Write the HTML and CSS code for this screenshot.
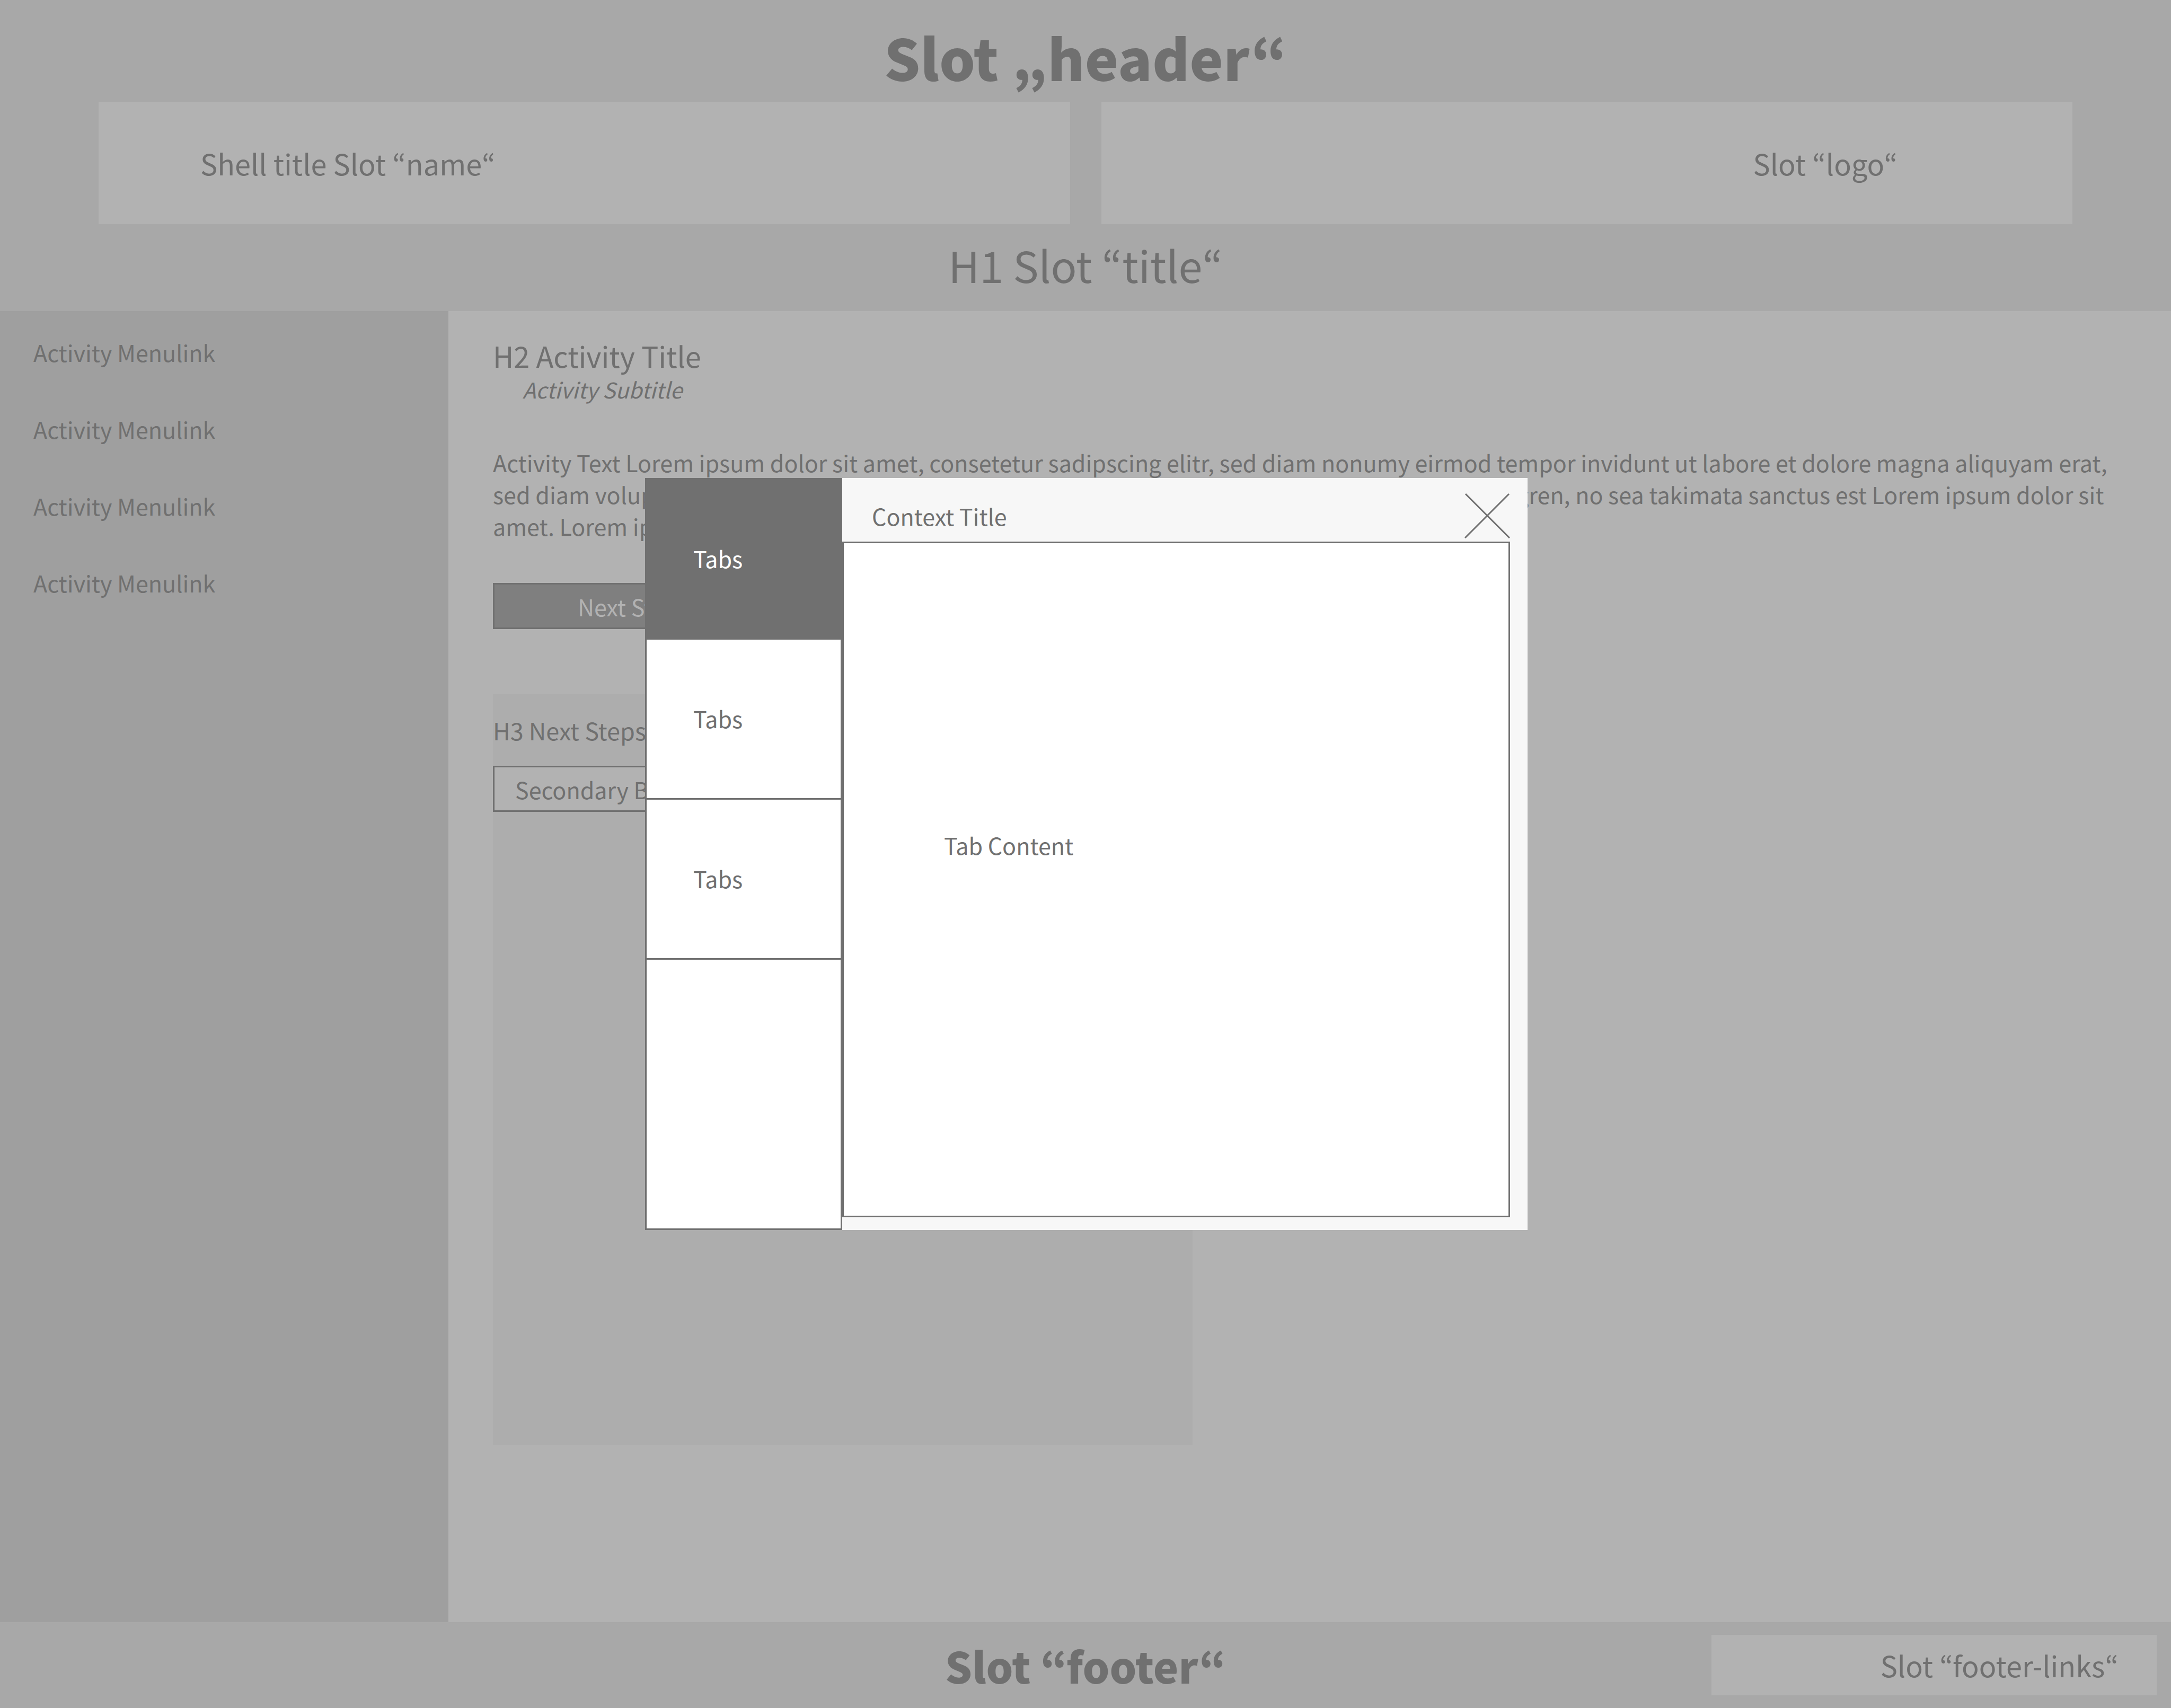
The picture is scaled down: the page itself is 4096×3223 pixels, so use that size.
FILE: index.html
```html
<!DOCTYPE html>
<html lang="en">
<head>
<meta charset="utf-8">
<title>Shell layout</title>
<link rel="stylesheet" href="styles.css">
</head>
<body>
<header class="shell-header">
  <p class="slot-title slot-title-header">Slot „header“</p>
  <div class="header-slots">
    <div class="slot slot-name">Shell title Slot “name“</div>
    <div class="slot slot-logo">Slot “logo“</div>
  </div>
  <h1 class="page-title">H1 Slot “title“</h1>
</header>

<div class="shell-body">
  <nav class="sidebar" aria-label="Activities">
    <a class="menu-link" href="#">Activity Menulink</a>
    <a class="menu-link" href="#">Activity Menulink</a>
    <a class="menu-link" href="#">Activity Menulink</a>
    <a class="menu-link" href="#">Activity Menulink</a>
  </nav>
  <main class="activity">
    <h2 class="activity-title">H2 Activity Title</h2>
    <p class="activity-subtitle">Activity Subtitle</p>
    <p class="activity-text">Activity Text Lorem ipsum dolor sit amet, consetetur sadipscing elitr, sed diam nonumy eirmod tempor invidunt ut labore et dolore magna aliquyam erat, sed diam voluptua. At vero eos et accusam et justo duo dolores et ea rebum. Stet clita kasd gubergren, no sea takimata sanctus est Lorem ipsum dolor sit amet. Lorem ipsum dolor sit amet.</p>
    <button class="button button-primary" type="button">Next Step</button>
    <section class="next-steps">
      <h3 class="next-steps-title">H3 Next Steps</h3>
      <button class="button button-secondary" type="button">Secondary Button</button>
    </section>
  </main>
</div>

<footer class="shell-footer">
  <p class="slot-title slot-title-footer">Slot “footer“</p>
  <div class="slot slot-links">Slot “footer-links“</div>
</footer>

<div class="modal-layer">
  <div class="modal" role="dialog" aria-modal="true" aria-labelledby="context-title">
    <div class="tabs" role="tablist" aria-orientation="vertical">
      <button class="tab tab-active" type="button" role="tab" aria-selected="true">Tabs</button>
      <button class="tab" type="button" role="tab" aria-selected="false">Tabs</button>
      <button class="tab" type="button" role="tab" aria-selected="false">Tabs</button>
    </div>
    <div class="context">
      <div class="context-bar">
        <h2 class="context-title" id="context-title">Context Title</h2>
        <button class="close" type="button" aria-label="Close">
          <svg class="close-icon" viewBox="0 0 86 86" aria-hidden="true"><path d="M2 2 85 85M84 2 1 85"/></svg>
        </button>
      </div>
      <div class="tab-panel" role="tabpanel">Tab Content</div>
    </div>
  </div>
</div>
</body>
</html>
```

FILE: styles.css
```css
:root {
  --ink: #707070;
  --bar: #a8a8a8;
  --surface: #b2b2b2;
  --sidebar: #9f9f9f;
  --panel: #adadad;
  --primary: #7f7f7f;
}

* {
  box-sizing: border-box;
  margin: 0;
}

body {
  min-height: 100vh;
  display: flex;
  flex-direction: column;
  background: var(--surface);
  color: var(--ink);
  font-family: "Noto Sans CJK KR", "Noto Sans", sans-serif;
  font-size: 43px;
  line-height: 60px;
}

button {
  font: inherit;
  color: inherit;
  text-align: left;
  border-radius: 0;
}

/* Header and footer slots */
.shell-header {
  padding: 21px 186px 12px;
  background: var(--bar);
}

.slot-title {
  font-weight: 900;
  text-align: center;
}

.slot-title-header {
  font-size: 107px;
  line-height: 171px;
}

.slot-title-footer {
  grid-column: 2;
  font-size: 80px;
  line-height: 162px;
}

.header-slots {
  display: grid;
  grid-template-columns: 1fr 1fr;
  gap: 59px;
}

.slot {
  display: flex;
  align-items: center;
  background: var(--surface);
  font-size: 54px;
}

.slot-name {
  min-height: 231px;
  padding-left: 192px;
}

.slot-logo {
  justify-content: flex-end;
  padding-right: 330px;
}

.page-title {
  font-size: 81px;
  font-weight: 400;
  line-height: 152px;
  text-align: center;
}

.shell-footer {
  display: grid;
  grid-template-columns: 1fr auto 1fr;
  align-items: center;
  padding: 0 27px;
  background: var(--bar);
}

.slot-links {
  justify-self: end;
  justify-content: flex-end;
  width: 840px;
  height: 114px;
  padding-right: 72px;
}

/* Sidebar and activity */
.shell-body {
  flex: 1;
  display: grid;
  grid-template-columns: 846px 1fr;
}

.sidebar {
  display: flex;
  flex-direction: column;
  align-items: flex-start;
  gap: 85px;
  padding: 47px 63px;
  background: var(--sidebar);
}

.menu-link {
  color: inherit;
  text-decoration: none;
}

.activity {
  padding: 51px 100px 100px 84px;
}

.activity-title {
  font-size: 54px;
  font-weight: 400;
  line-height: 66px;
}

.activity-subtitle {
  padding-left: 56px;
  font-size: 41px;
  font-style: italic;
}

.activity-text {
  margin: 78px 0;
}

.button {
  display: block;
  height: 87px;
  border: 3px solid var(--ink);
}

.button-primary {
  padding: 0 157px;
  background: var(--primary);
  color: var(--surface);
}

.button-secondary {
  padding: 0 39px;
  background: var(--surface);
}

.next-steps {
  max-width: 1320px;
  min-height: 1417px;
  margin-top: 123px;
  padding-top: 38px;
  background: var(--panel);
}

.next-steps-title {
  margin-bottom: 37px;
  font-size: 45px;
  font-weight: 400;
}

/* Dialog over the page */
.modal-layer {
  position: fixed;
  inset: 0;
  display: flex;
  align-items: center;
  justify-content: center;
  padding-left: 3px;
}

.modal {
  display: grid;
  grid-template-columns: 372px 1fr;
  width: 1665px;
  max-width: 100%;
  min-height: 1419px;
  background: #f7f7f7;
}

.tabs {
  display: flex;
  flex-direction: column;
  border: 3px solid var(--ink);
  background: #fff;
}

.tab {
  height: 302px;
  padding: 0 0 3px 88px;
  border: 0;
  border-bottom: 3px solid var(--ink);
  background: none;
}

.tab-active {
  background: var(--ink);
  color: #fff;
}

.context {
  display: flex;
  flex-direction: column;
  padding: 0 33px 24px 0;
}

.context-bar {
  display: flex;
  align-items: center;
  justify-content: space-between;
  padding: 28px 0 6px 56px;
}

.context-title {
  font-size: 43px;
  font-weight: 400;
}

.close {
  display: flex;
  padding: 0;
  border: 0;
  background: none;
}

.close-icon {
  width: 86px;
  height: 86px;
  fill: none;
  stroke: currentColor;
  stroke-width: 3;
}

.tab-panel {
  flex: 1;
  padding: 539px 189px;
  border: 3px solid var(--ink);
  background: #fff;
}
```
